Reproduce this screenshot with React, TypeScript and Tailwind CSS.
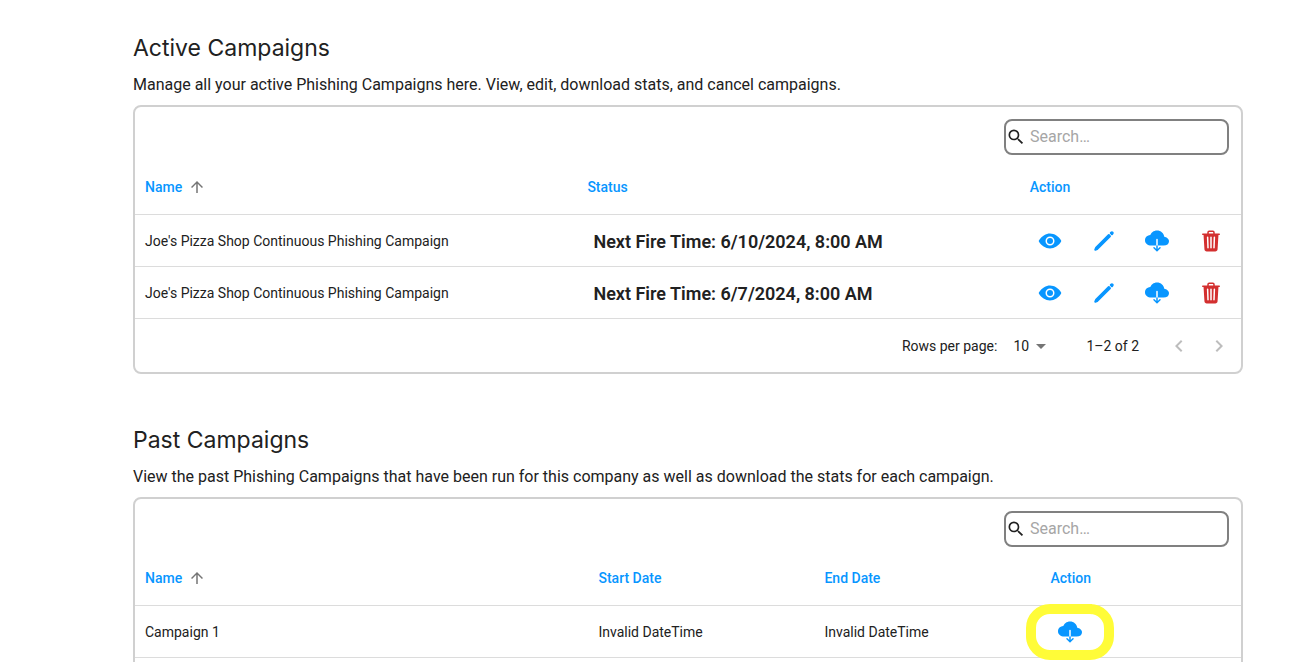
import { useState } from 'react'
import type { ReactNode } from 'react'
import { IoEye, IoPencil, IoCloudDownload, IoTrash } from 'react-icons/io5'
import { MdArrowDropDown, MdArrowUpward, MdKeyboardArrowLeft, MdKeyboardArrowRight, MdSearch } from 'react-icons/md'

const activeCampaigns = [
  { id: 1, name: "Joe's Pizza Shop Continuous Phishing Campaign", nextFire: '6/10/2024, 8:00 AM' },
  { id: 2, name: "Joe's Pizza Shop Continuous Phishing Campaign", nextFire: '6/7/2024, 8:00 AM' },
]

const pastCampaigns = [
  { id: 1, name: 'Campaign 1', start: 'Invalid DateTime', end: 'Invalid DateTime' },
]

interface IconButtonProps {
  label: string
  className?: string
  children: ReactNode
}

function IconButton({ label, className = 'text-[#0896ff]', children }: IconButtonProps) {
  return (
    <button type="button" aria-label={label} title={label} className={`flex h-8 w-8 items-center justify-center ${className}`}>
      {children}
    </button>
  )
}

function SearchBox({ label }: { label: string }) {
  const [query, setQuery] = useState('')

  return (
    <div className="flex justify-end px-3 pb-[5px] pt-3">
      <label className="flex h-9 w-[225px] items-center rounded-lg border-2 border-[#808080] text-[#212121]">
        <MdSearch className="h-5 w-5 flex-shrink-0" />
        <input
          type="text"
          aria-label={label}
          placeholder="Search…"
          value={query}
          onChange={e => setQuery(e.target.value)}
          className="ml-1 min-w-0 flex-1 text-base outline-none placeholder:text-[#a6a6a6]"
        />
      </label>
    </div>
  )
}

function HeadCell({ className = '', children }: { className?: string; children: ReactNode }) {
  return (
    <th scope="col" className={`px-[10px] text-left font-medium text-[#0896ff] ${className}`}>
      {children}
    </th>
  )
}

function NameSort() {
  return (
    <button type="button" className="flex items-center gap-1.5 font-medium">
      Name
      <MdArrowUpward className="h-[18px] w-[18px] text-[#757575]" />
    </button>
  )
}

interface SectionProps {
  title: string
  description: string
  children: ReactNode
}

function Section({ title, description, children }: SectionProps) {
  return (
    <section>
      <h2 className="font-['Inter',sans-serif] text-[23px] leading-8">{title}</h2>
      <p className="mt-[9px] text-base">{description}</p>
      <div className="mt-2 rounded-lg border-2 border-[#d0d0d0]">
        <SearchBox label={`Search ${title}`} />
        {children}
      </div>
    </section>
  )
}

function Pagination() {
  return (
    <div className="flex h-[53px] items-center justify-end pr-[10px] pt-0.5 text-sm">
      <label htmlFor="rows">Rows per page:</label>
      <div className="relative ml-4 mr-[37px] flex items-center">
        <select id="rows" defaultValue="10" className="w-9 appearance-none">
          <option>10</option>
          <option>25</option>
        </select>
        <MdArrowDropDown className="pointer-events-none absolute left-4 h-6 w-6 text-[#757575]" />
      </div>
      <span>1–2 of 2</span>
      <button type="button" aria-label="Previous page" disabled className="ml-7 text-[#bdbdbd]">
        <MdKeyboardArrowLeft className="h-6 w-6" />
      </button>
      <button type="button" aria-label="Next page" disabled className="ml-4 text-[#bdbdbd]">
        <MdKeyboardArrowRight className="h-6 w-6" />
      </button>
    </div>
  )
}

export default function App() {
  return (
    <main className="flex h-screen flex-col gap-[50px] overflow-hidden bg-white pl-[133px] pr-[69px] pt-8 font-['Roboto',sans-serif] text-[#212121]">
      <Section
        title="Active Campaigns"
        description="Manage all your active Phishing Campaigns here. View, edit, download stats, and cancel campaigns."
      >
        <table className="w-full table-fixed text-sm">
          <thead>
            <tr className="h-[54px] border-b border-[#dcdcdc]">
              <HeadCell className="w-2/5"><NameSort /></HeadCell>
              <HeadCell className="w-2/5">Status</HeadCell>
              <HeadCell>Action</HeadCell>
            </tr>
          </thead>
          <tbody>
            {activeCampaigns.map(c => (
              <tr key={c.id} className="h-[52px] border-b border-[#dcdcdc]">
                <td className="px-[10px] pt-0.5">{c.name}</td>
                <td className="px-4 pt-1 text-lg font-semibold">Next Fire Time: {c.nextFire}</td>
                <td className="px-[14px] pt-0.5">
                  <div className="flex items-center justify-between">
                    <IconButton label="View"><IoEye className="h-6 w-6" /></IconButton>
                    <IconButton label="Edit"><IoPencil className="h-6 w-6" /></IconButton>
                    <IconButton label="Download stats"><IoCloudDownload className="h-6 w-6" /></IconButton>
                    <IconButton label="Cancel campaign" className="text-[#d32f2f]"><IoTrash className="h-6 w-6" /></IconButton>
                  </div>
                </td>
              </tr>
            ))}
          </tbody>
        </table>
        <Pagination />
      </Section>

      <Section
        title="Past Campaigns"
        description="View the past Phishing Campaigns that have been run for this company as well as download the stats for each campaign."
      >
        <table className="mb-14 w-full table-fixed text-sm">
          <thead>
            <tr className="h-[54px] border-b border-[#dcdcdc]">
              <HeadCell className="w-[41%]"><NameSort /></HeadCell>
              <HeadCell className="w-[226px]">Start Date</HeadCell>
              <HeadCell className="w-[226px]">End Date</HeadCell>
              <HeadCell>Action</HeadCell>
            </tr>
          </thead>
          <tbody>
            {pastCampaigns.map(c => (
              <tr key={c.id} className="h-[52px] border-b border-[#dcdcdc]">
                <td className="px-[10px]">{c.name}</td>
                <td className="px-[10px]">{c.start}</td>
                <td className="px-[10px]">{c.end}</td>
                <td className="px-[14px]">
                  <div className="relative w-8">
                    <IconButton label="Download stats"><IoCloudDownload className="h-6 w-6" /></IconButton>
                    {/* Highlighter ring over the download action */}
                    <span className="pointer-events-none absolute -inset-x-7 -inset-y-3 rounded-3xl border-[10px] border-[#fffc38]" />
                  </div>
                </td>
              </tr>
            ))}
          </tbody>
        </table>
      </Section>
    </main>
  )
}
